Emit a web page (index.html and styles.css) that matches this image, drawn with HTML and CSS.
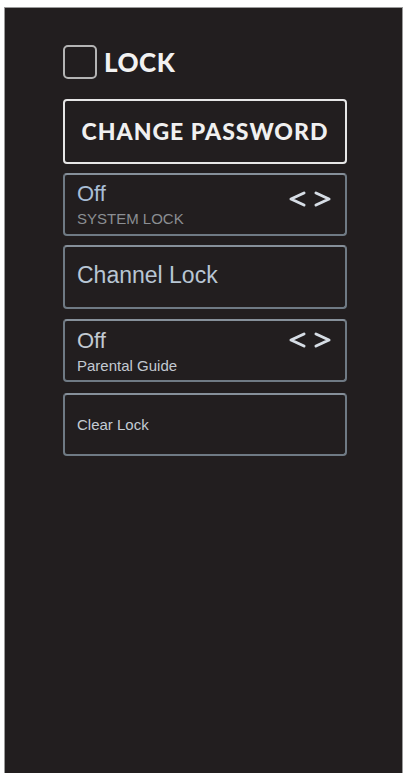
FILE: index.html
```html
<!DOCTYPE html>
<html lang="en">
<head>
  <meta charset="UTF-8">
  <meta name="viewport" content="width=device-width, initial-scale=1.0">
  <title>Lock</title>
  <link rel="stylesheet" href="styles.css">
</head>
<body>
  <div class="screen">
    <div class="menu">
      <div class="menu-title">
        <span class="checkbox"></span>
        <h1>LOCK</h1>
      </div>

      <div class="item item-main">CHANGE PASSWORD</div>

      <div class="item item-option item-system">
        <div class="option-text">
          <div class="option-value">Off</div>
          <div class="option-label caps">SYSTEM LOCK</div>
        </div>
        <div class="arrows">
          <svg width="18" height="16" viewBox="0 0 18 16"><polyline points="16,2 3,8 16,14" /></svg>
          <svg width="18" height="16" viewBox="0 0 18 16"><polyline points="2,2 15,8 2,14" /></svg>
        </div>
      </div>

      <div class="item item-big">Channel Lock</div>

      <div class="item item-option item-guide">
        <div class="option-text">
          <div class="option-value light">Off</div>
          <div class="option-label">Parental Guide</div>
        </div>
        <div class="arrows">
          <svg width="18" height="16" viewBox="0 0 18 16"><polyline points="16,2 3,8 16,14" /></svg>
          <svg width="18" height="16" viewBox="0 0 18 16"><polyline points="2,2 15,8 2,14" /></svg>
        </div>
      </div>

      <div class="item item-small">Clear Lock</div>
    </div>
  </div>
</body>
</html>
```

FILE: styles.css
```css
body {
  margin: 0;
  background: #ffffff;
  font-family: "Liberation Sans", Arial, sans-serif;
}
.screen {
  width: 397px;
  height: 765px;
  margin: 8px 0 0 5px;
  background-color: #221e1f;
  box-shadow: 0 0 0 1px #9a9a9a;
  box-sizing: border-box;
  padding: 37px 0 0 58px;
}
.menu {
  width: 284px;
  display: flex;
  flex-direction: column;
  gap: 9px;
}
.menu-title {
  display: flex;
  align-items: center;
  gap: 7px;
  height: 34px;
  margin-bottom: 11px;
}
.checkbox {
  width: 34px;
  height: 34px;
  box-sizing: border-box;
  border: 2px solid #b4b4b4;
  border-radius: 5px;
}
h1 {
  margin: 0;
  font-family: Lato, "Open Sans", sans-serif;
  font-weight: 900;
  font-size: 26px;
  letter-spacing: 0.5px;
  color: #f2f2f2;
}
.item {
  box-sizing: border-box;
  height: 63px;
  border: 2px solid #6f7a84;
  border-top-color: #86909a;
  border-radius: 4px;
  padding: 0 13px 0 12px;
  display: flex;
  align-items: center;
  color: #b8c6d4;
}
.item-main {
  height: 65px;
  border: 2.5px solid #e6e6e6;
  justify-content: center;
  padding: 0 0 1px;
  font-family: Lato, "Open Sans", sans-serif;
  font-weight: 900;
  font-size: 23px;
  letter-spacing: 1px;
  color: #f0f0f0;
}
.item-big {
  height: 64px;
  font-size: 23px;
  padding-bottom: 3px;
}
.item-small {
  font-size: 15px;
  color: #c4ccd4;
  margin-top: 2px;
}
.item-option {
  justify-content: space-between;
  align-items: flex-start;
  padding-top: 8px;
}
.item-guide {
  margin-top: 1px;
  padding-top: 9px;
}
.option-value {
  font-size: 22px;
  line-height: 22px;
  color: #a9bed6;
}
.option-value.light {
  color: #c2cad2;
}
.option-label {
  margin-top: 6px;
  font-size: 15px;
  line-height: 15px;
  color: #c2cad2;
}
.option-label.caps {
  color: #8b8e93;
}
.arrows {
  display: flex;
  gap: 8px;
  margin-top: 8px;
}
.item-guide .arrows {
  margin-top: 2px;
}
.arrows polyline {
  fill: none;
  stroke: #d6dde5;
  stroke-width: 3;
  stroke-linecap: round;
  stroke-linejoin: round;
}
```
